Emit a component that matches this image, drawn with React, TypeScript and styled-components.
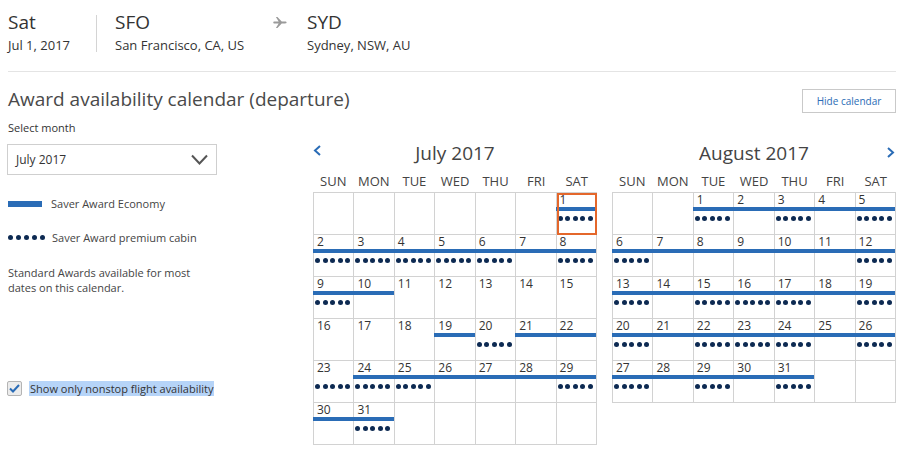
import React from "react";
import styled, { createGlobalStyle } from "styled-components";

const BLUE = "#2a6cb6";
const NAVY = "#0d2a52";
const GRID = "#d2d2d2";

const GlobalStyle = createGlobalStyle`
  html, body {
    margin: 0;
    padding: 0;
    background: #fff;
  }
  body {
    font-family: "Open Sans", "Liberation Sans", Arial, sans-serif;
    color: #333;
  }
  * {
    box-sizing: border-box;
  }
`;

const Page = styled.div`
  width: 900px;
  height: 452px;
  padding: 11px 4px 0 8px;
  overflow: hidden;
`;

/* trip summary */
const TripBar = styled.div`
  display: flex;
  align-items: stretch;
  padding-bottom: 17px;
  border-bottom: 1px solid #e4e4e4;
`;
const TripCol = styled.div<{ $width?: number }>`
  display: flex;
  flex-direction: column;
  width: ${({ $width }) => ($width ? `${$width}px` : "auto")};
`;
const Divider = styled.div`
  width: 1px;
  background: #d4d4d4;
  margin: 4px 18px 2px 0;
`;
const Big = styled.div`
  font-size: 19px;
  line-height: 23px;
  color: #333;
  margin-bottom: 2px;
`;
const Small = styled.div`
  font-size: 13px;
  line-height: 18px;
  color: #333;
`;
const PlaneWrap = styled.div`
  width: 15px;
  height: 11px;
  margin: 6px 19px 0 0;
  display: flex;
  svg {
    display: block;
  }
`;

/* title */
const TitleRow = styled.div`
  display: flex;
  justify-content: space-between;
  align-items: flex-end;
  margin-top: 14px;
`;
const Title = styled.h1`
  margin: 0;
  font-size: 19px;
  line-height: 27px;
  font-weight: 400;
  color: #4a4a4a;
`;
const HideButton = styled.button`
  width: 94px;
  height: 24px;
  padding: 0;
  border: 1px solid #c9c9c9;
  background: #fff;
  color: ${BLUE};
  font-family: inherit;
  font-size: 10px;
  cursor: pointer;
`;

/* body */
const Body = styled.div`
  display: flex;
  justify-content: space-between;
  align-items: flex-start;
  margin-top: 7px;
`;
const Side = styled.div`
  width: 210px;
  display: flex;
  flex-direction: column;
`;
const FieldLabel = styled.div`
  font-size: 11px;
  line-height: 15px;
  color: #333;
`;
const SelectBox = styled.div`
  margin: 9px 0 0 -1px;
  height: 31px;
  width: 210px;
  border: 1px solid #cfcfcf;
  display: flex;
  align-items: center;
  justify-content: space-between;
  padding: 0 8px;
  font-size: 12px;
  color: #333;
`;
const LegendRow = styled.div<{ $gap: number }>`
  display: flex;
  align-items: center;
  height: 15px;
  margin-top: ${({ $gap }) => $gap}px;
  font-size: 11px;
  color: #444;
`;
const LegendBar = styled.span`
  width: 34px;
  height: 6px;
  background: ${BLUE};
  margin-right: 9px;
`;
const Note = styled.p`
  margin: 20px 0 0;
  font-size: 11px;
  line-height: 15px;
  color: #444;
`;
const CheckRow = styled.label`
  display: flex;
  align-items: center;
  margin: 86px 0 0 -1px;
  font-size: 11px;
  line-height: 15px;
  color: #333;
  white-space: nowrap;
`;
const CheckBox = styled.span`
  flex: none;
  width: 15px;
  height: 15px;
  border: 1px solid #b4b4b4;
  border-radius: 2px;
  background: #ececec;
  display: flex;
  align-items: center;
  justify-content: center;
  margin-right: 7px;
`;
const Highlight = styled.span`
  background: #b6d4f8;
  padding: 0 1px;
`;

/* calendars */
const Calendars = styled.div`
  width: 583px;
  display: flex;
  justify-content: space-between;
  margin-top: 21px;
`;
const Month = styled.div`
  width: 284px;
`;
const MonthHead = styled.div`
  display: grid;
  grid-template-columns: 20px 1fr 20px;
  height: 24px;
`;
const MonthTitle = styled.div`
  grid-column: 2;
  text-align: center;
  font-size: 19px;
  line-height: 24px;
  color: #444;
`;
const NavArrow = styled.span<{ $dir: "left" | "right" }>`
  grid-column: ${({ $dir }) => ($dir === "left" ? 1 : 3)};
  grid-row: 1;
  justify-self: ${({ $dir }) => ($dir === "left" ? "start" : "end")};
  margin-top: ${({ $dir }) => ($dir === "left" ? 4 : 6)}px;
  margin-right: ${({ $dir }) => ($dir === "left" ? 0 : 1)}px;
  svg {
    display: block;
  }
`;
const WeekRow = styled.div`
  display: grid;
  grid-template-columns: repeat(7, 1fr);
  margin-top: 7px;
  font-size: 13px;
  line-height: 18px;
  color: #444;
  text-align: center;
`;
const Grid = styled.div`
  display: grid;
  grid-template-columns: repeat(7, 1fr);
  margin-top: 2px;
  border-top: 1px solid ${GRID};
  border-left: 1px solid ${GRID};
`;
const Cell = styled.div<{ $selected?: boolean }>`
  height: 42px;
  border-right: 1px solid ${GRID};
  border-bottom: 1px solid ${GRID};
  outline: ${({ $selected }) => ($selected ? "2px solid #e4672b" : "none")};
  outline-offset: -2px;
`;
const DayNum = styled.div`
  height: 14px;
  padding-left: 3px;
  font-size: 12px;
  line-height: 14px;
  color: #333;
`;
const Bar = styled.div<{ $show: boolean }>`
  height: 4px;
  margin-left: -1px;
  background: ${({ $show }) => ($show ? BLUE : "transparent")};
`;
const DotRow = styled.div<{ $gap: number; $inCell?: boolean }>`
  display: flex;
  gap: ${({ $gap }) => $gap}px;
  margin-top: ${({ $inCell }) => ($inCell ? 5 : 0)}px;
  margin-left: ${({ $inCell }) => ($inCell ? 1 : 0)}px;
  margin-right: ${({ $inCell }) => ($inCell ? 0 : 7)}px;
`;
const Dot = styled.span`
  width: 5px;
  height: 5px;
  border-radius: 50%;
  background: ${NAVY};
`;

const Dots = ({ gap, inCell }: { gap: number; inCell?: boolean }) => (
  <DotRow $gap={gap} $inCell={inCell}>
    {[0, 1, 2, 3, 4].map((i) => (
      <Dot key={i} />
    ))}
  </DotRow>
);

const Plane = () => (
  <svg width="15" height="11" viewBox="0 0 24 18">
    <path
      fill="#9a9a9a"
      d="M1 7.5h8L4.5 0H7l7 7.5h5.5c1.4 0 2.5.7 2.5 1.5s-1.1 1.5-2.5 1.5H14L7 18H4.5L9 10.5H1L0 9z"
    />
  </svg>
);

const Chevron = ({ dir }: { dir: "left" | "right" | "down" }) => {
  if (dir === "down") {
    return (
      <svg width="17" height="11" viewBox="0 0 17 11">
        <polyline points="1,1.5 8.5,9.5 16,1.5" fill="none" stroke="#555" strokeWidth="2" />
      </svg>
    );
  }
  const pts = dir === "left" ? "7,1 2,5.5 7,10" : "1,1 6,5.5 1,10";
  return (
    <svg width="8" height="11" viewBox="0 0 8 11">
      <polyline points={pts} fill="none" stroke={BLUE} strokeWidth="2" />
    </svg>
  );
};

type Day = { d: number; bar?: boolean; dots?: boolean; sel?: boolean } | null;

// b = bar, d = dots, s = selected, "" = nothing
const build = (lead: number, codes: string[], total: number): Day[] => {
  const days: Day[] = Array(lead).fill(null);
  codes.forEach((c, i) =>
    days.push({ d: i + 1, bar: c.includes("b"), dots: c.includes("d"), sel: c.includes("s") })
  );
  while (days.length < total) days.push(null);
  return days;
};

const july = build(
  6,
  [
    "bds",
    "bd", "bd", "bd", "bd", "bd", "b", "bd",
    "bd", "b", "", "", "", "", "",
    "", "", "", "b", "d", "b", "b",
    "d", "bd", "bd", "b", "b", "b", "bd",
    "b", "bd",
  ],
  42
);

const august = build(
  2,
  [
    "bd", "b", "bd", "b", "bd",
    "bd", "b", "b", "b", "b", "b", "bd",
    "bd", "b", "bd", "bd", "bd", "b", "bd",
    "bd", "b", "bd", "bd", "bd", "b", "bd",
    "bd", "b", "bd", "b", "bd",
  ],
  35
);

const WEEK = ["SUN", "MON", "TUE", "WED", "THU", "FRI", "SAT"];

const MonthCalendar = ({ title, days, nav }: { title: string; days: Day[]; nav: "left" | "right" }) => (
  <Month>
    <MonthHead>
      <NavArrow $dir={nav}>
        <Chevron dir={nav} />
      </NavArrow>
      <MonthTitle>{title}</MonthTitle>
    </MonthHead>
    <WeekRow>
      {WEEK.map((w) => (
        <div key={w}>{w}</div>
      ))}
    </WeekRow>
    <Grid>
      {days.map((day, i) => (
        <Cell key={i} $selected={day?.sel}>
          {day && (
            <>
              <DayNum>{day.d}</DayNum>
              <Bar $show={!!day.bar} />
              {day.dots && <Dots gap={2.5} inCell />}
            </>
          )}
        </Cell>
      ))}
    </Grid>
  </Month>
);

export default function App() {
  return (
    <Page>
      <GlobalStyle />
      <TripBar>
        <TripCol $width={88}>
          <Big>Sat</Big>
          <Small>Jul 1, 2017</Small>
        </TripCol>
        <Divider />
        <TripCol $width={158}>
          <Big>SFO</Big>
          <Small>San Francisco, CA, US</Small>
        </TripCol>
        <PlaneWrap>
          <Plane />
        </PlaneWrap>
        <TripCol>
          <Big>SYD</Big>
          <Small>Sydney, NSW, AU</Small>
        </TripCol>
      </TripBar>

      <TitleRow>
        <Title>Award availability calendar (departure)</Title>
        <HideButton>Hide calendar</HideButton>
      </TitleRow>

      <Body>
        <Side>
          <FieldLabel>Select month</FieldLabel>
          <SelectBox>
            <span>July 2017</span>
            <Chevron dir="down" />
          </SelectBox>
          <LegendRow $gap={21}>
            <LegendBar />
            Saver Award Economy
          </LegendRow>
          <LegendRow $gap={19}>
            <Dots gap={3} />
            Saver Award premium cabin
          </LegendRow>
          <Note>
            Standard Awards available for most
            <br />
            dates on this calendar.
          </Note>
          <CheckRow>
            <CheckBox>
              <svg width="11" height="9" viewBox="0 0 11 9">
                <polyline points="1,4.5 4,7.5 10,1" fill="none" stroke={BLUE} strokeWidth="2" />
              </svg>
            </CheckBox>
            <Highlight>Show only nonstop flight availability</Highlight>
          </CheckRow>
        </Side>

        <Calendars>
          <MonthCalendar title="July 2017" days={july} nav="left" />
          <MonthCalendar title="August 2017" days={august} nav="right" />
        </Calendars>
      </Body>
    </Page>
  );
}
